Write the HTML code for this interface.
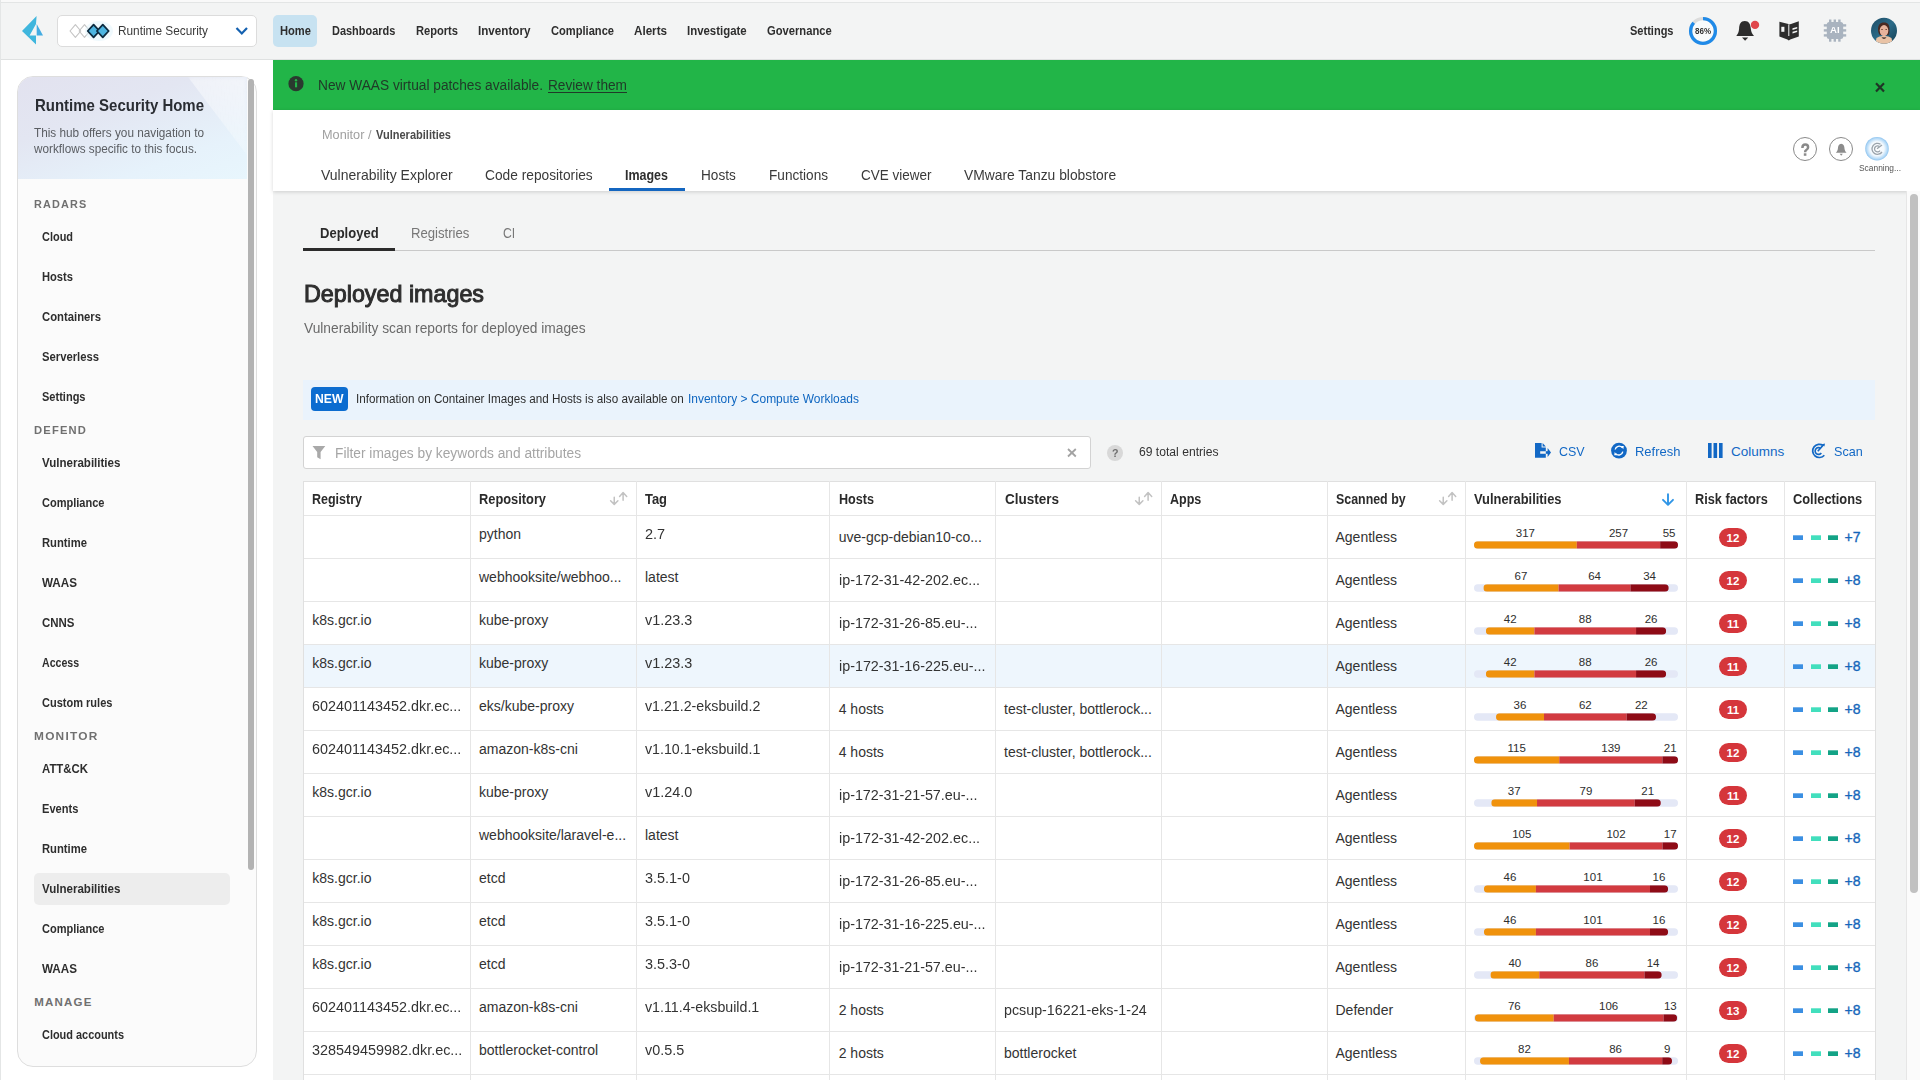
<!DOCTYPE html><html><head><meta charset='utf-8'><title>Deployed images</title><style>
*{margin:0;padding:0;box-sizing:border-box}
html,body{width:1920px;height:1080px;overflow:hidden;background:#fff;font-family:"Liberation Sans",sans-serif}
.a{position:absolute}
.t{position:absolute;white-space:nowrap;transform-origin:0 0}
svg{position:absolute;overflow:visible}
</style></head><body>
<div class="a" style="left:0px;top:0px;width:1920px;height:60px;background:#f3f4f4;border-bottom:1px solid #dfe1e1"></div>
<div class="a" style="left:0px;top:0px;width:1920px;height:2px;background:#f9f9f9"></div>
<div class="a" style="left:0px;top:2px;width:1920px;height:1px;background:#e3e5e5"></div>
<svg style="left:0;top:0" width="60" height="60"><path d="M36.6 16 L22 31 L36 44.5 L36 35.6 L29.6 35.6 L36 24 Z" fill="#3fb6dd"/><path d="M36.7 24 L43 35.6 L36.7 35.6 Z" fill="#44ace2"/></svg>
<div class="a" style="left:57px;top:15px;width:200px;height:32px;background:#fff;border:1px solid #dcdcdc;border-radius:5px"></div>
<svg style="left:0;top:0" width="130" height="60"><g stroke-linejoin="round"><path d="M75.4 24.6 L80.80000000000001 31 L75.4 37.4 L70.0 31 Z" fill="none" stroke="#c4c4c4" stroke-width="1.1"/><path d="M84.5 24.6 L89.9 31 L84.5 37.4 L79.1 31 Z" fill="none" stroke="#c4c4c4" stroke-width="1.1"/><ellipse cx="99" cy="31" rx="14" ry="10" fill="#dff3fb" opacity="0.5"/><path d="M93.6 24.7 L99.5 31 L93.6 37.3 L87.69999999999999 31 Z" fill="#4db5e1" stroke="#0c2b40" stroke-width="1.8"/><path d="M102.8 24.7 L108.7 31 L102.8 37.3 L96.89999999999999 31 Z" fill="#4db5e1" stroke="#0c2b40" stroke-width="1.8"/></g></svg>
<div class="t" style="left:117.50px;top:24.30px;font-size:13px;line-height:13px;color:#3a3a3a;transform:scaleX(0.9093);">Runtime Security</div>
<svg style="left:0;top:0" width="260" height="60"><path d="M236.5 28 L241.8 33.5 L247 28" fill="none" stroke="#1461b0" stroke-width="2.2"/></svg>
<div class="a" style="left:273px;top:15px;width:44px;height:32px;background:#c7e2f1;border-radius:5px"></div>
<div class="t" style="left:279.70px;top:25.22px;font-size:12.5px;line-height:12.5px;color:#2e2e2e;font-weight:bold;transform:scaleX(0.8926);">Home</div>
<div class="t" style="left:331.70px;top:25.22px;font-size:12.5px;line-height:12.5px;color:#2e2e2e;font-weight:bold;transform:scaleX(0.8762);">Dashboards</div>
<div class="t" style="left:416.00px;top:25.22px;font-size:12.5px;line-height:12.5px;color:#2e2e2e;font-weight:bold;transform:scaleX(0.8893);">Reports</div>
<div class="t" style="left:478.00px;top:25.22px;font-size:12.5px;line-height:12.5px;color:#2e2e2e;font-weight:bold;transform:scaleX(0.9331);">Inventory</div>
<div class="t" style="left:551.00px;top:25.22px;font-size:12.5px;line-height:12.5px;color:#2e2e2e;font-weight:bold;transform:scaleX(0.8892);">Compliance</div>
<div class="t" style="left:634.30px;top:25.22px;font-size:12.5px;line-height:12.5px;color:#2e2e2e;font-weight:bold;transform:scaleX(0.9314);">Alerts</div>
<div class="t" style="left:687.30px;top:25.22px;font-size:12.5px;line-height:12.5px;color:#2e2e2e;font-weight:bold;transform:scaleX(0.9142);">Investigate</div>
<div class="t" style="left:767.00px;top:25.22px;font-size:12.5px;line-height:12.5px;color:#2e2e2e;font-weight:bold;transform:scaleX(0.8955);">Governance</div>
<div class="t" style="left:1629.80px;top:25.22px;font-size:12.5px;line-height:12.5px;color:#2e2e2e;font-weight:bold;transform:scaleX(0.8822);">Settings</div>
<svg style="left:0;top:0" width="1920" height="60"><circle cx="1703" cy="31" r="12.4" fill="#f9fbfc" stroke="#dcdcdc" stroke-width="3.3"/><circle cx="1703" cy="31" r="12.4" fill="none" stroke="#1f8ae8" stroke-width="3.3" stroke-dasharray="67 77.9" transform="rotate(-90 1703 31)"/></svg>
<div class="t" style="left:1695.00px;top:27.00px;font-size:8.5px;line-height:8.5px;color:#333;font-weight:bold;transform:scaleX(0.9406);">86%</div>
<svg style="left:0;top:0" width="1920" height="60"><path d="M1744.8 21 C1740.6 21 1739.3 24.5 1739.1 28.5 C1738.9 32.3 1737.7 34 1736.3 35.9 L1754 35.9 C1752.4 34 1751.1 32.3 1750.8 28.5 C1750.5 24.5 1749 21 1744.8 21 Z" fill="#2d2d2d"/><path d="M1742 37.6 L1748.2 37.6 L1745.1 40.7 Z" fill="#2d2d2d"/><circle cx="1755" cy="24.9" r="4.2" fill="#e0474c"/><path d="M1779.4 21.8 L1788.4 24 L1788.8 24.6 L1791 24 L1798.8 21.2 L1798.8 36.5 L1790.2 39.4 L1788.8 40.6 L1787.4 39.4 L1779.4 36.5 Z" fill="#2d2d2d"/><rect x="1788.3" y="24.5" width="1" height="11.5" fill="#f3f4f4"/><rect x="1781.3" y="26.8" width="3.1" height="5" fill="#f3f4f4"/><path d="M1792.5 28.3 L1797.2 27 L1797.2 28.6 L1792.5 29.9 Z M1792.5 31.8 L1797.2 30.5 L1797.2 32.1 L1792.5 33.4 Z" fill="#f3f4f4"/><g fill="#a9b3bf"><rect x="1826.8" y="22.1" width="16.4" height="16.9" rx="2.5"/><rect x="1829.0" y="19.5" width="2.4" height="3.5"/><rect x="1829.0" y="38.2" width="2.4" height="3.5"/><rect x="1823.8" y="24.2" width="3.5" height="2.4"/><rect x="1842.7" y="24.2" width="3.5" height="2.4"/><rect x="1833.6" y="19.5" width="2.4" height="3.5"/><rect x="1833.6" y="38.2" width="2.4" height="3.5"/><rect x="1823.8" y="29.2" width="3.5" height="2.4"/><rect x="1842.7" y="29.2" width="3.5" height="2.4"/><rect x="1838.2" y="19.5" width="2.4" height="3.5"/><rect x="1838.2" y="38.2" width="2.4" height="3.5"/><rect x="1823.8" y="34.2" width="3.5" height="2.4"/><rect x="1842.7" y="34.2" width="3.5" height="2.4"/></g><defs><clipPath id="avc"><circle cx="1884" cy="30.8" r="13"/></clipPath><linearGradient id="avg" x1="0" y1="0" x2="1" y2="1"><stop offset="0" stop-color="#1d4a63"/><stop offset="0.5" stop-color="#2b6b88"/><stop offset="1" stop-color="#123a4e"/></linearGradient></defs><g clip-path="url(#avc)"><rect x="1870" y="17" width="28" height="28" fill="url(#avg)"/><path d="M1875 45 L1876.5 38 Q1880 35.5 1884 36 Q1888 35.5 1891.5 38 L1893 45 Z" fill="#e9c3a6"/><path d="M1884 22.4 C1880 22.4 1878 25 1878 29 C1878 32 1878.8 34 1879.8 35 L1888.5 35 C1889.5 34 1889.5 32 1889.5 29 C1889.5 25 1888 22.4 1884 22.4 Z" fill="#4a2a22"/><ellipse cx="1884" cy="30.6" rx="4.3" ry="5.6" fill="#e6b39c"/><rect x="1881.3" y="29" width="1.4" height="1" fill="#6b4030"/><rect x="1885.5" y="29" width="1.4" height="1" fill="#6b4030"/><path d="M1881.5 37.2 Q1884 40.5 1886.5 37.2 Q1884 38 1881.5 37.2 Z" fill="#1f1212"/></g></svg>
<div class="t" style="left:1829.60px;top:26.18px;font-size:9px;line-height:9px;color:#fff;font-weight:bold;transform:scaleX(1.0667);">AI</div>
<div class="a" style="left:0px;top:60px;width:273px;height:1020px;background:#fff"></div>
<div class="a" style="left:0px;top:0px;width:1px;height:1080px;background:#e4e6e6"></div>
<div class="a" style="left:17px;top:76px;width:240px;height:991px;background:#fbfbfb;border:1px solid #dedede;border-radius:16px;overflow:hidden"></div>
<div class="a" style="left:18px;top:77px;width:229px;height:102px;border-radius:15px 0 0 0;background:linear-gradient(160deg,#e2e2ef 0%,#e3e6f2 35%,#e6f2fb 75%,#e8f6fd 100%)"></div>
<div class="a" style="left:188px;top:77px;width:59px;height:78px;background:linear-gradient(200deg,rgba(255,255,255,0.55),rgba(255,255,255,0.15));clip-path:polygon(0 0,100% 0,100% 100%);filter:blur(2px)"></div>
<div class="a" style="left:248px;top:79px;width:6px;height:791px;background:#b3b3b3;border-radius:3px"></div>
<div class="t" style="left:34.70px;top:96.83px;font-size:16.5px;line-height:16.5px;color:#2a2d33;font-weight:bold;transform:scaleX(0.9080);">Runtime Security Home</div>
<div class="t" style="left:34.30px;top:126.54px;font-size:12px;line-height:12px;color:#5a5d62;transform:scaleX(0.9814);">This hub offers you navigation to</div>
<div class="t" style="left:34.30px;top:142.54px;font-size:12px;line-height:12px;color:#5a5d62;transform:scaleX(0.9777);">workflows specific to this focus.</div>
<div class="a" style="left:34px;top:873px;width:196px;height:32px;background:#ededed;border-radius:5px"></div>
<div class="t" style="left:34.30px;top:199.07px;font-size:11.5px;line-height:11.5px;color:#707070;font-weight:bold;letter-spacing:1.2px;transform:scaleX(0.9451);">RADARS</div>
<div class="t" style="left:42.00px;top:230.84px;font-size:12px;line-height:12px;color:#2e2e2e;font-weight:bold;transform:scaleX(0.9121);">Cloud</div>
<div class="t" style="left:42.00px;top:270.84px;font-size:12px;line-height:12px;color:#2e2e2e;font-weight:bold;transform:scaleX(0.9298);">Hosts</div>
<div class="t" style="left:42.00px;top:310.84px;font-size:12px;line-height:12px;color:#2e2e2e;font-weight:bold;transform:scaleX(0.9413);">Containers</div>
<div class="t" style="left:42.00px;top:350.84px;font-size:12px;line-height:12px;color:#2e2e2e;font-weight:bold;transform:scaleX(0.9387);">Serverless</div>
<div class="t" style="left:42.00px;top:390.84px;font-size:12px;line-height:12px;color:#2e2e2e;font-weight:bold;transform:scaleX(0.9189);">Settings</div>
<div class="t" style="left:34.30px;top:425.07px;font-size:11.5px;line-height:11.5px;color:#707070;font-weight:bold;letter-spacing:1.2px;transform:scaleX(0.9728);">DEFEND</div>
<div class="t" style="left:42.00px;top:456.84px;font-size:12px;line-height:12px;color:#2e2e2e;font-weight:bold;transform:scaleX(0.9610);">Vulnerabilities</div>
<div class="t" style="left:42.00px;top:496.84px;font-size:12px;line-height:12px;color:#2e2e2e;font-weight:bold;transform:scaleX(0.9189);">Compliance</div>
<div class="t" style="left:42.00px;top:536.84px;font-size:12px;line-height:12px;color:#2e2e2e;font-weight:bold;transform:scaleX(0.9375);">Runtime</div>
<div class="t" style="left:42.00px;top:576.84px;font-size:12px;line-height:12px;color:#2e2e2e;font-weight:bold;transform:scaleX(0.9722);">WAAS</div>
<div class="t" style="left:42.00px;top:616.84px;font-size:12px;line-height:12px;color:#2e2e2e;font-weight:bold;transform:scaleX(0.9558);">CNNS</div>
<div class="t" style="left:42.00px;top:656.84px;font-size:12px;line-height:12px;color:#2e2e2e;font-weight:bold;transform:scaleX(0.8803);">Access</div>
<div class="t" style="left:42.00px;top:696.84px;font-size:12px;line-height:12px;color:#2e2e2e;font-weight:bold;transform:scaleX(0.9181);">Custom rules</div>
<div class="t" style="left:34.30px;top:731.07px;font-size:11.5px;line-height:11.5px;color:#707070;font-weight:bold;letter-spacing:1.2px;transform:scaleX(1.0321);">MONITOR</div>
<div class="t" style="left:42.00px;top:762.84px;font-size:12px;line-height:12px;color:#2e2e2e;font-weight:bold;transform:scaleX(0.9498);">ATT&amp;CK</div>
<div class="t" style="left:42.00px;top:802.84px;font-size:12px;line-height:12px;color:#2e2e2e;font-weight:bold;transform:scaleX(0.9225);">Events</div>
<div class="t" style="left:42.00px;top:842.84px;font-size:12px;line-height:12px;color:#2e2e2e;font-weight:bold;transform:scaleX(0.9375);">Runtime</div>
<div class="t" style="left:42.00px;top:882.84px;font-size:12px;line-height:12px;color:#2e2e2e;font-weight:bold;transform:scaleX(0.9610);">Vulnerabilities</div>
<div class="t" style="left:42.00px;top:922.84px;font-size:12px;line-height:12px;color:#2e2e2e;font-weight:bold;transform:scaleX(0.9189);">Compliance</div>
<div class="t" style="left:42.00px;top:962.84px;font-size:12px;line-height:12px;color:#2e2e2e;font-weight:bold;transform:scaleX(0.9722);">WAAS</div>
<div class="t" style="left:34.30px;top:997.07px;font-size:11.5px;line-height:11.5px;color:#707070;font-weight:bold;letter-spacing:1.2px;">MANAGE</div>
<div class="t" style="left:42.00px;top:1028.84px;font-size:12px;line-height:12px;color:#2e2e2e;font-weight:bold;transform:scaleX(0.9111);">Cloud accounts</div>
<div class="a" style="left:273px;top:60px;width:1647px;height:50px;background:#22b548"></div>
<svg style="left:0;top:0" width="1920" height="120"><circle cx="296" cy="83.7" r="7.6" fill="#2a3a2f"/><circle cx="296" cy="80.2" r="1.2" fill="#22b548"/><rect x="295" y="82.3" width="2.1" height="5" fill="#22b548"/><path d="M1876 83.3 L1884 91.5 M1884 83.3 L1876 91.5" stroke="#1f3526" stroke-width="2.2"/></svg>
<div class="t" style="left:318.40px;top:77.95px;font-size:14px;line-height:14px;color:#203a28;transform:scaleX(0.9791);">New WAAS virtual patches available.</div>
<div class="t" style="left:547.50px;top:77.95px;font-size:14px;line-height:14px;color:#203a28;transform:scaleX(0.9763);text-decoration:underline;text-underline-offset:1.5px">Review them</div>
<div class="a" style="left:273px;top:191px;width:1633px;height:889px;background:#f3f4f4"></div>
<div class="a" style="left:273px;top:110px;width:1647px;height:81px;background:#fff;box-shadow:0 1px 4px rgba(0,0,0,0.16)"></div>
<div class="a" style="left:1906px;top:191px;width:14px;height:889px;background:#fbfbfb;border-left:1px solid #e6e6e6"></div>
<div class="a" style="left:1910px;top:194px;width:8px;height:699px;background:#c1c1c1;border-radius:4px"></div>
<div class="t" style="left:321.50px;top:128.99px;font-size:12.3px;line-height:12.3px;color:#a0a0a0;transform:scaleX(1.0339);">Monitor / </div>
<div class="t" style="left:375.50px;top:128.99px;font-size:12.3px;line-height:12.3px;color:#4a4a4a;font-weight:bold;transform:scaleX(0.8969);">Vulnerabilities</div>
<div class="t" style="left:321.00px;top:167.93px;font-size:14.5px;line-height:14.5px;color:#3a3a3a;transform:scaleX(0.9651);">Vulnerability Explorer</div>
<div class="t" style="left:485.00px;top:167.93px;font-size:14.5px;line-height:14.5px;color:#3a3a3a;transform:scaleX(0.9477);">Code repositories</div>
<div class="t" style="left:625.40px;top:167.93px;font-size:14.5px;line-height:14.5px;color:#2f2f2f;font-weight:bold;transform:scaleX(0.8605);">Images</div>
<div class="t" style="left:701.00px;top:167.93px;font-size:14.5px;line-height:14.5px;color:#3a3a3a;transform:scaleX(0.9389);">Hosts</div>
<div class="t" style="left:769.00px;top:167.93px;font-size:14.5px;line-height:14.5px;color:#3a3a3a;transform:scaleX(0.9385);">Functions</div>
<div class="t" style="left:861.00px;top:167.93px;font-size:14.5px;line-height:14.5px;color:#3a3a3a;transform:scaleX(0.9308);">CVE viewer</div>
<div class="t" style="left:964.40px;top:167.93px;font-size:14.5px;line-height:14.5px;color:#3a3a3a;transform:scaleX(0.9547);">VMware Tanzu blobstore</div>
<div class="a" style="left:609px;top:188px;width:76px;height:3px;background:#1466c0"></div>
<svg style="left:0;top:0" width="1920" height="200"><circle cx="1805" cy="149" r="11.5" fill="#fff" stroke="#8a8a8a" stroke-width="1"/><circle cx="1841" cy="149" r="11.5" fill="#fff" stroke="#8a8a8a" stroke-width="1"/><defs><radialGradient id="sg" cx="50%" cy="50%" r="50%"><stop offset="0" stop-color="#ffffff"/><stop offset="0.6" stop-color="#f3f9fe"/><stop offset="0.88" stop-color="#b3d9f7"/><stop offset="1" stop-color="#8ec3ee"/></radialGradient></defs><circle cx="1877" cy="148.7" r="11.8" fill="url(#sg)"/><path d="M1841.2 143.8 C1838.8 143.8 1838 146 1837.9 148.5 C1837.8 150.5 1836.8 151.7 1835.8 152.8 L1846.6 152.8 C1845.6 151.7 1844.6 150.5 1844.5 148.5 C1844.4 146 1843.6 143.8 1841.2 143.8 Z" fill="#8c8c8c"/><path d="M1839.6 153.8 L1842.8 153.8 L1841.2 155.8 Z" fill="#8c8c8c"/><path d="M1802.4 148 Q1802.4 144.6 1805.3 144.6 Q1808.1 144.6 1808.1 147.2 Q1808.1 149 1806.3 150 Q1805.1 150.7 1805.1 152.2" fill="none" stroke="#8a8a8a" stroke-width="2.5"/><rect x="1803.8" y="153.3" width="2.6" height="2.5" fill="#8a8a8a"/><path d="M1880.5 144.2 A5.5 5.5 0 1 0 1882 152 M1879.5 146.6 A3 3 0 1 0 1880 150.6" fill="none" stroke="#9aa3ab" stroke-width="1.3"/><path d="M1877 148.7 L1882 145" stroke="#9aa3ab" stroke-width="1.3"/></svg>
<div class="t" style="left:1859.00px;top:164.18px;font-size:9px;line-height:9px;color:#555;transform:scaleX(0.9328);">Scanning...</div>
<div class="t" style="left:319.70px;top:225.73px;font-size:14.5px;line-height:14.5px;color:#2b2b2b;font-weight:bold;transform:scaleX(0.8979);">Deployed</div>
<div class="t" style="left:411.30px;top:225.73px;font-size:14.5px;line-height:14.5px;color:#777;transform:scaleX(0.9059);">Registries</div>
<div class="t" style="left:502.50px;top:225.73px;font-size:14.5px;line-height:14.5px;color:#777;transform:scaleX(0.8414);">CI</div>
<div class="a" style="left:303px;top:250px;width:1572px;height:1px;background:#c9c9c9"></div>
<div class="a" style="left:303px;top:248px;width:92px;height:3px;background:#2b2b2b"></div>
<div class="t" style="left:304.00px;top:281.68px;font-size:24px;line-height:24px;color:#2e2e2e;transform:scaleX(0.9706);-webkit-text-stroke:1px #2e2e2e">Deployed images</div>
<div class="t" style="left:303.70px;top:321.15px;font-size:14px;line-height:14px;color:#6a6a6a;transform:scaleX(0.9825);">Vulnerability scan reports for deployed images</div>
<div class="a" style="left:303px;top:379.5px;width:1572px;height:40px;background:#eaf3fc"></div>
<div class="a" style="left:311px;top:387px;width:37px;height:24px;background:#0b6cd0;border-radius:4px"></div>
<div class="t" style="left:315.30px;top:393.09px;font-size:12.3px;line-height:12.3px;color:#fff;font-weight:bold;transform:scaleX(0.9897);">NEW</div>
<div class="t" style="left:356.20px;top:392.72px;font-size:12.5px;line-height:12.5px;color:#2e2e2e;transform:scaleX(0.9341);">Information on Container Images and Hosts is also available on </div>
<div class="t" style="left:688.00px;top:392.72px;font-size:12.5px;line-height:12.5px;color:#0f66c0;transform:scaleX(0.9571);">Inventory &gt; Compute Workloads</div>
<div class="a" style="left:303px;top:436px;width:788px;height:33px;background:#fff;border:1px solid #d3d3d3;border-radius:3px"></div>
<svg style="left:0;top:0" width="1920" height="480"><path d="M312.5 446 L325.3 446 L320.6 452 L320.6 459.2 L317.2 457.2 L317.2 452 Z" fill="#a9a9a9"/><path d="M1068 449 L1075.8 456.5 M1075.8 449 L1068 456.5" stroke="#a3a3a3" stroke-width="1.8"/><circle cx="1115" cy="453" r="8" fill="#d8d8d8"/></svg>
<div class="t" style="left:334.50px;top:446.15px;font-size:14px;line-height:14px;color:#a5a5a5;transform:scaleX(0.9819);">Filter images by keywords and attributes</div>
<div class="t" style="left:1111.50px;top:447.99px;font-size:11px;line-height:11px;color:#6e6e6e;font-weight:bold;transform:scaleX(0.9674);">?</div>
<div class="t" style="left:1139.40px;top:446.22px;font-size:12.5px;line-height:12.5px;color:#333;transform:scaleX(0.9708);">69 total entries</div>
<svg style="left:0;top:0" width="1920" height="480"><path d="M1535 443 L1541.6 443 L1541.6 447.6 L1545.8 447.6 L1545.8 451.2 L1540.2 451.2 L1540.2 453.8 L1545.8 453.8 L1545.8 457.8 L1535 457.8 Z" fill="#1268c5"/><path d="M1542.6 443 L1545.8 446.5 L1542.6 446.5 Z" fill="#1268c5"/><rect x="1545.8" y="451.2" width="2.2" height="2.6" fill="#1268c5"/><path d="M1547.6 448 L1551 452.5 L1547.6 457 Z" fill="#1268c5"/><circle cx="1619" cy="450.6" r="7.9" fill="#1268c5"/><path d="M1615.2 449.5 A4 4 0 0 1 1622.2 447.6 M1622.8 451.7 A4 4 0 0 1 1615.8 453.6" fill="none" stroke="#fff" stroke-width="1.4"/><path d="M1620.8 446 L1623.8 446 L1623.3 449.2 Z M1617.2 455.2 L1614.2 455.2 L1614.7 452 Z" fill="#fff"/><rect x="1708" y="443" width="3.6" height="15" fill="#1268c5"/><rect x="1713.5" y="443" width="3.6" height="15" fill="#1268c5"/><rect x="1719" y="443" width="3.6" height="15" fill="#1268c5"/><path d="M1823.2 445.6 A6.6 6.6 0 1 0 1824.3 455.2" fill="none" stroke="#1268c5" stroke-width="1.7"/><path d="M1820.6 448.3 A3.4 3.4 0 1 0 1821.3 453" fill="none" stroke="#1268c5" stroke-width="1.6"/><path d="M1817.8 451.2 L1823.6 444.6" stroke="#1268c5" stroke-width="1.6"/><path d="M1822 444.2 L1825 443.6 L1824.4 446.6 Z" fill="#1268c5"/></svg>
<div class="t" style="left:1559.00px;top:444.57px;font-size:13.5px;line-height:13.5px;color:#1268c5;transform:scaleX(0.9222);">CSV</div>
<div class="t" style="left:1635.00px;top:444.57px;font-size:13.5px;line-height:13.5px;color:#1268c5;transform:scaleX(0.9605);">Refresh</div>
<div class="t" style="left:1731.00px;top:444.57px;font-size:13.5px;line-height:13.5px;color:#1268c5;">Columns</div>
<div class="t" style="left:1834.00px;top:444.57px;font-size:13.5px;line-height:13.5px;color:#1268c5;transform:scaleX(0.9327);">Scan</div>
<div class="a" style="left:303px;top:481px;width:1573px;height:599px;background:#fff;border:1px solid #e0e0e0;border-bottom:none"></div>
<div class="a" style="left:304px;top:645px;width:1571px;height:42px;background:#eef6fd"></div>
<div class="a" style="left:304px;top:515px;width:1571px;height:1px;background:#e6e6e6"></div>
<div class="a" style="left:304px;top:558px;width:1571px;height:1px;background:#e6e6e6"></div>
<div class="a" style="left:304px;top:601px;width:1571px;height:1px;background:#e6e6e6"></div>
<div class="a" style="left:304px;top:644px;width:1571px;height:1px;background:#e6e6e6"></div>
<div class="a" style="left:304px;top:687px;width:1571px;height:1px;background:#e6e6e6"></div>
<div class="a" style="left:304px;top:730px;width:1571px;height:1px;background:#e6e6e6"></div>
<div class="a" style="left:304px;top:773px;width:1571px;height:1px;background:#e6e6e6"></div>
<div class="a" style="left:304px;top:816px;width:1571px;height:1px;background:#e6e6e6"></div>
<div class="a" style="left:304px;top:859px;width:1571px;height:1px;background:#e6e6e6"></div>
<div class="a" style="left:304px;top:902px;width:1571px;height:1px;background:#e6e6e6"></div>
<div class="a" style="left:304px;top:945px;width:1571px;height:1px;background:#e6e6e6"></div>
<div class="a" style="left:304px;top:988px;width:1571px;height:1px;background:#e6e6e6"></div>
<div class="a" style="left:304px;top:1031px;width:1571px;height:1px;background:#e6e6e6"></div>
<div class="a" style="left:304px;top:1074px;width:1571px;height:1px;background:#e6e6e6"></div>
<div class="a" style="left:470px;top:481px;width:1px;height:599px;background:#e6e6e6"></div>
<div class="a" style="left:636px;top:481px;width:1px;height:599px;background:#e6e6e6"></div>
<div class="a" style="left:829px;top:481px;width:1px;height:599px;background:#e6e6e6"></div>
<div class="a" style="left:995px;top:481px;width:1px;height:599px;background:#e6e6e6"></div>
<div class="a" style="left:1161px;top:481px;width:1px;height:599px;background:#e6e6e6"></div>
<div class="a" style="left:1327px;top:481px;width:1px;height:599px;background:#e6e6e6"></div>
<div class="a" style="left:1465px;top:481px;width:1px;height:599px;background:#e6e6e6"></div>
<div class="a" style="left:1686px;top:481px;width:1px;height:599px;background:#e6e6e6"></div>
<div class="a" style="left:1784px;top:481px;width:1px;height:599px;background:#e6e6e6"></div>
<div class="t" style="left:312.30px;top:491.53px;font-size:14.5px;line-height:14.5px;color:#2b2b2b;font-weight:bold;transform:scaleX(0.8618);">Registry</div>
<div class="t" style="left:479.00px;top:491.53px;font-size:14.5px;line-height:14.5px;color:#2b2b2b;font-weight:bold;transform:scaleX(0.8847);">Repository</div>
<div class="t" style="left:645.00px;top:491.53px;font-size:14.5px;line-height:14.5px;color:#2b2b2b;font-weight:bold;transform:scaleX(0.8906);">Tag</div>
<div class="t" style="left:838.70px;top:491.53px;font-size:14.5px;line-height:14.5px;color:#2b2b2b;font-weight:bold;transform:scaleX(0.8688);">Hosts</div>
<div class="t" style="left:1004.50px;top:491.53px;font-size:14.5px;line-height:14.5px;color:#2b2b2b;font-weight:bold;transform:scaleX(0.9307);">Clusters</div>
<div class="t" style="left:1170.30px;top:491.53px;font-size:14.5px;line-height:14.5px;color:#2b2b2b;font-weight:bold;transform:scaleX(0.8634);">Apps</div>
<div class="t" style="left:1335.50px;top:491.53px;font-size:14.5px;line-height:14.5px;color:#2b2b2b;font-weight:bold;transform:scaleX(0.8552);">Scanned by</div>
<div class="t" style="left:1474.00px;top:491.53px;font-size:14.5px;line-height:14.5px;color:#2b2b2b;font-weight:bold;transform:scaleX(0.8876);">Vulnerabilities</div>
<div class="t" style="left:1694.80px;top:491.53px;font-size:14.5px;line-height:14.5px;color:#2b2b2b;font-weight:bold;transform:scaleX(0.8771);">Risk factors</div>
<div class="t" style="left:1793.00px;top:491.53px;font-size:14.5px;line-height:14.5px;color:#2b2b2b;font-weight:bold;transform:scaleX(0.8855);">Collections</div>
<svg style="left:0;top:0" width="1920" height="1080"><g fill="none" stroke="#c2c2c2" stroke-width="1.5" stroke-linecap="round" stroke-linejoin="round"><path d="M614.25 497.3 L614.25 504.3 M610.6 500.8 L614.25 504.4 L617.9 500.8"/><path d="M623.1 500.2 L623.1 492.7 M619.6 496.4 L623.1 492.6 L626.7 496.4"/></g><g fill="none" stroke="#c2c2c2" stroke-width="1.5" stroke-linecap="round" stroke-linejoin="round"><path d="M1139.25 497.3 L1139.25 504.3 M1135.6 500.8 L1139.25 504.4 L1142.9 500.8"/><path d="M1148.1 500.2 L1148.1 492.7 M1144.6 496.4 L1148.1 492.6 L1151.7 496.4"/></g><g fill="none" stroke="#c2c2c2" stroke-width="1.5" stroke-linecap="round" stroke-linejoin="round"><path d="M1443.25 497.3 L1443.25 504.3 M1439.6 500.8 L1443.25 504.4 L1446.9 500.8"/><path d="M1452.1 500.2 L1452.1 492.7 M1448.6 496.4 L1452.1 492.6 L1455.7 496.4"/></g><g fill="none" stroke="#2f95e6" stroke-width="1.9" stroke-linecap="round" stroke-linejoin="round"><path d="M1668 494.2 L1668 504.6 M1663 499.8 L1668 504.8 L1673 499.8"/></g><rect x="1474" y="541.2" width="204" height="7.5" rx="3.75" fill="#e4e8f6"/><clipPath id="cb0"><rect x="1474.00" y="541.2" width="204.00" height="7.5" rx="3.75"/></clipPath><g clip-path="url(#cb0)"><rect x="1474.00" y="541.2" width="102.81" height="7.5" fill="#f0920c"/><rect x="1576.81" y="541.2" width="83.35" height="7.5" fill="#d23b40"/><rect x="1660.16" y="541.2" width="18.84" height="7.5" fill="#8e0b16"/></g><rect x="1719" y="528" width="28" height="19" rx="9.5" fill="#d5363b"/><rect x="1793" y="535.3" width="10" height="4.7" fill="#3b8fe2"/><rect x="1811" y="535.3" width="10" height="4.7" fill="#42dfbd"/><rect x="1828" y="535.3" width="10" height="4.7" fill="#13a386"/><rect x="1474" y="584.2" width="204" height="7.5" rx="3.75" fill="#e4e8f6"/><clipPath id="cb1"><rect x="1483.38" y="584.2" width="185.23" height="7.5" rx="3.75"/></clipPath><g clip-path="url(#cb1)"><rect x="1483.38" y="584.2" width="75.22" height="7.5" fill="#f0920c"/><rect x="1558.60" y="584.2" width="71.85" height="7.5" fill="#d23b40"/><rect x="1630.45" y="584.2" width="39.17" height="7.5" fill="#8e0b16"/></g><rect x="1719" y="571" width="28" height="19" rx="9.5" fill="#d5363b"/><rect x="1793" y="578.3" width="10" height="4.7" fill="#3b8fe2"/><rect x="1811" y="578.3" width="10" height="4.7" fill="#42dfbd"/><rect x="1828" y="578.3" width="10" height="4.7" fill="#13a386"/><rect x="1474" y="627.2" width="204" height="7.5" rx="3.75" fill="#e4e8f6"/><clipPath id="cb2"><rect x="1485.91" y="627.2" width="180.18" height="7.5" rx="3.75"/></clipPath><g clip-path="url(#cb2)"><rect x="1485.91" y="627.2" width="48.51" height="7.5" fill="#f0920c"/><rect x="1534.42" y="627.2" width="101.64" height="7.5" fill="#d23b40"/><rect x="1636.06" y="627.2" width="31.03" height="7.5" fill="#8e0b16"/></g><rect x="1719" y="614" width="28" height="19" rx="9.5" fill="#d5363b"/><rect x="1793" y="621.3" width="10" height="4.7" fill="#3b8fe2"/><rect x="1811" y="621.3" width="10" height="4.7" fill="#42dfbd"/><rect x="1828" y="621.3" width="10" height="4.7" fill="#13a386"/><rect x="1474" y="670.2" width="204" height="7.5" rx="3.75" fill="#e4e8f6"/><clipPath id="cb3"><rect x="1485.91" y="670.2" width="180.18" height="7.5" rx="3.75"/></clipPath><g clip-path="url(#cb3)"><rect x="1485.91" y="670.2" width="48.51" height="7.5" fill="#f0920c"/><rect x="1534.42" y="670.2" width="101.64" height="7.5" fill="#d23b40"/><rect x="1636.06" y="670.2" width="31.03" height="7.5" fill="#8e0b16"/></g><rect x="1719" y="657" width="28" height="19" rx="9.5" fill="#d5363b"/><rect x="1793" y="664.3" width="10" height="4.7" fill="#3b8fe2"/><rect x="1811" y="664.3" width="10" height="4.7" fill="#42dfbd"/><rect x="1828" y="664.3" width="10" height="4.7" fill="#13a386"/><rect x="1474" y="713.2" width="204" height="7.5" rx="3.75" fill="#e4e8f6"/><clipPath id="cb4"><rect x="1496.02" y="713.2" width="159.97" height="7.5" rx="3.75"/></clipPath><g clip-path="url(#cb4)"><rect x="1496.02" y="713.2" width="47.99" height="7.5" fill="#f0920c"/><rect x="1544.01" y="713.2" width="82.65" height="7.5" fill="#d23b40"/><rect x="1626.66" y="713.2" width="30.33" height="7.5" fill="#8e0b16"/></g><rect x="1719" y="700" width="28" height="19" rx="9.5" fill="#d5363b"/><rect x="1793" y="707.3" width="10" height="4.7" fill="#3b8fe2"/><rect x="1811" y="707.3" width="10" height="4.7" fill="#42dfbd"/><rect x="1828" y="707.3" width="10" height="4.7" fill="#13a386"/><rect x="1474" y="756.2" width="204" height="7.5" rx="3.75" fill="#e4e8f6"/><clipPath id="cb5"><rect x="1474.00" y="756.2" width="204.00" height="7.5" rx="3.75"/></clipPath><g clip-path="url(#cb5)"><rect x="1474.00" y="756.2" width="85.31" height="7.5" fill="#f0920c"/><rect x="1559.31" y="756.2" width="103.11" height="7.5" fill="#d23b40"/><rect x="1662.42" y="756.2" width="16.58" height="7.5" fill="#8e0b16"/></g><rect x="1719" y="743" width="28" height="19" rx="9.5" fill="#d5363b"/><rect x="1793" y="750.3" width="10" height="4.7" fill="#3b8fe2"/><rect x="1811" y="750.3" width="10" height="4.7" fill="#42dfbd"/><rect x="1828" y="750.3" width="10" height="4.7" fill="#13a386"/><rect x="1474" y="799.2" width="204" height="7.5" rx="3.75" fill="#e4e8f6"/><clipPath id="cb6"><rect x="1491.24" y="799.2" width="169.51" height="7.5" rx="3.75"/></clipPath><g clip-path="url(#cb6)"><rect x="1491.24" y="799.2" width="45.78" height="7.5" fill="#f0920c"/><rect x="1537.02" y="799.2" width="97.75" height="7.5" fill="#d23b40"/><rect x="1634.77" y="799.2" width="26.98" height="7.5" fill="#8e0b16"/></g><rect x="1719" y="786" width="28" height="19" rx="9.5" fill="#d5363b"/><rect x="1793" y="793.3" width="10" height="4.7" fill="#3b8fe2"/><rect x="1811" y="793.3" width="10" height="4.7" fill="#42dfbd"/><rect x="1828" y="793.3" width="10" height="4.7" fill="#13a386"/><rect x="1474" y="842.2" width="204" height="7.5" rx="3.75" fill="#e4e8f6"/><clipPath id="cb7"><rect x="1474.00" y="842.2" width="204.00" height="7.5" rx="3.75"/></clipPath><g clip-path="url(#cb7)"><rect x="1474.00" y="842.2" width="95.62" height="7.5" fill="#f0920c"/><rect x="1569.62" y="842.2" width="92.89" height="7.5" fill="#d23b40"/><rect x="1662.52" y="842.2" width="16.48" height="7.5" fill="#8e0b16"/></g><rect x="1719" y="829" width="28" height="19" rx="9.5" fill="#d5363b"/><rect x="1793" y="836.3" width="10" height="4.7" fill="#3b8fe2"/><rect x="1811" y="836.3" width="10" height="4.7" fill="#42dfbd"/><rect x="1828" y="836.3" width="10" height="4.7" fill="#13a386"/><rect x="1474" y="885.2" width="204" height="7.5" rx="3.75" fill="#e4e8f6"/><clipPath id="cb8"><rect x="1483.95" y="885.2" width="184.11" height="7.5" rx="3.75"/></clipPath><g clip-path="url(#cb8)"><rect x="1483.95" y="885.2" width="51.96" height="7.5" fill="#f0920c"/><rect x="1535.90" y="885.2" width="114.08" height="7.5" fill="#d23b40"/><rect x="1649.98" y="885.2" width="19.07" height="7.5" fill="#8e0b16"/></g><rect x="1719" y="872" width="28" height="19" rx="9.5" fill="#d5363b"/><rect x="1793" y="879.3" width="10" height="4.7" fill="#3b8fe2"/><rect x="1811" y="879.3" width="10" height="4.7" fill="#42dfbd"/><rect x="1828" y="879.3" width="10" height="4.7" fill="#13a386"/><rect x="1474" y="928.2" width="204" height="7.5" rx="3.75" fill="#e4e8f6"/><clipPath id="cb9"><rect x="1483.95" y="928.2" width="184.11" height="7.5" rx="3.75"/></clipPath><g clip-path="url(#cb9)"><rect x="1483.95" y="928.2" width="51.96" height="7.5" fill="#f0920c"/><rect x="1535.90" y="928.2" width="114.08" height="7.5" fill="#d23b40"/><rect x="1649.98" y="928.2" width="19.07" height="7.5" fill="#8e0b16"/></g><rect x="1719" y="915" width="28" height="19" rx="9.5" fill="#d5363b"/><rect x="1793" y="922.3" width="10" height="4.7" fill="#3b8fe2"/><rect x="1811" y="922.3" width="10" height="4.7" fill="#42dfbd"/><rect x="1828" y="922.3" width="10" height="4.7" fill="#13a386"/><rect x="1474" y="971.2" width="204" height="7.5" rx="3.75" fill="#e4e8f6"/><clipPath id="cb10"><rect x="1490.40" y="971.2" width="171.20" height="7.5" rx="3.75"/></clipPath><g clip-path="url(#cb10)"><rect x="1490.40" y="971.2" width="48.91" height="7.5" fill="#f0920c"/><rect x="1539.32" y="971.2" width="105.16" height="7.5" fill="#d23b40"/><rect x="1644.48" y="971.2" width="18.12" height="7.5" fill="#8e0b16"/></g><rect x="1719" y="958" width="28" height="19" rx="9.5" fill="#d5363b"/><rect x="1793" y="965.3" width="10" height="4.7" fill="#3b8fe2"/><rect x="1811" y="965.3" width="10" height="4.7" fill="#42dfbd"/><rect x="1828" y="965.3" width="10" height="4.7" fill="#13a386"/><rect x="1474" y="1014.2" width="204" height="7.5" rx="3.75" fill="#e4e8f6"/><clipPath id="cb11"><rect x="1474.96" y="1014.2" width="202.07" height="7.5" rx="3.75"/></clipPath><g clip-path="url(#cb11)"><rect x="1474.96" y="1014.2" width="78.76" height="7.5" fill="#f0920c"/><rect x="1553.72" y="1014.2" width="109.84" height="7.5" fill="#d23b40"/><rect x="1663.56" y="1014.2" width="14.47" height="7.5" fill="#8e0b16"/></g><rect x="1719" y="1001" width="28" height="19" rx="9.5" fill="#d5363b"/><rect x="1793" y="1008.3" width="10" height="4.7" fill="#3b8fe2"/><rect x="1811" y="1008.3" width="10" height="4.7" fill="#42dfbd"/><rect x="1828" y="1008.3" width="10" height="4.7" fill="#13a386"/><rect x="1474" y="1057.2" width="204" height="7.5" rx="3.75" fill="#e4e8f6"/><clipPath id="cb12"><rect x="1480.02" y="1057.2" width="191.97" height="7.5" rx="3.75"/></clipPath><g clip-path="url(#cb12)"><rect x="1480.02" y="1057.2" width="88.93" height="7.5" fill="#f0920c"/><rect x="1568.95" y="1057.2" width="93.27" height="7.5" fill="#d23b40"/><rect x="1662.22" y="1057.2" width="10.76" height="7.5" fill="#8e0b16"/></g><rect x="1719" y="1044" width="28" height="19" rx="9.5" fill="#d5363b"/><rect x="1793" y="1051.3" width="10" height="4.7" fill="#3b8fe2"/><rect x="1811" y="1051.3" width="10" height="4.7" fill="#42dfbd"/><rect x="1828" y="1051.3" width="10" height="4.7" fill="#13a386"/></svg>
<div class="t" style="left:479.00px;top:527.15px;font-size:14px;line-height:14px;color:#333;">python</div>
<div class="t" style="left:645.00px;top:527.15px;font-size:14px;line-height:14px;color:#333;transform:scaleX(1.0344);">2.7</div>
<div class="t" style="left:838.70px;top:530.15px;font-size:14px;line-height:14px;color:#333;">uve-gcp-debian10-co...</div>
<div class="t" style="left:1335.50px;top:530.15px;font-size:14px;line-height:14px;color:#333;">Agentless</div>
<div class="t" style="left:1515.81px;top:527.87px;font-size:11.5px;line-height:11.5px;color:#2e2e2e;">317</div>
<div class="t" style="left:1608.89px;top:527.87px;font-size:11.5px;line-height:11.5px;color:#2e2e2e;">257</div>
<div class="t" style="left:1662.69px;top:527.87px;font-size:11.5px;line-height:11.5px;color:#2e2e2e;">55</div>
<div class="t" style="left:1726.60px;top:533.07px;font-size:11.5px;line-height:11.5px;color:#fff;font-weight:bold;">12</div>
<div class="t" style="left:1844.50px;top:530.15px;font-size:14px;line-height:14px;color:#1566ba;-webkit-text-stroke:0.35px #1566ba">+7</div>
<div class="t" style="left:479.00px;top:570.15px;font-size:14px;line-height:14px;color:#333;">webhooksite/webhoo...</div>
<div class="t" style="left:645.00px;top:570.15px;font-size:14px;line-height:14px;color:#333;">latest</div>
<div class="t" style="left:838.70px;top:573.15px;font-size:14px;line-height:14px;color:#333;transform:scaleX(1.0243);">ip-172-31-42-202.ec...</div>
<div class="t" style="left:1335.50px;top:573.15px;font-size:14px;line-height:14px;color:#333;">Agentless</div>
<div class="t" style="left:1514.60px;top:570.87px;font-size:11.5px;line-height:11.5px;color:#2e2e2e;">67</div>
<div class="t" style="left:1588.13px;top:570.87px;font-size:11.5px;line-height:11.5px;color:#2e2e2e;">64</div>
<div class="t" style="left:1643.14px;top:570.87px;font-size:11.5px;line-height:11.5px;color:#2e2e2e;">34</div>
<div class="t" style="left:1726.60px;top:576.07px;font-size:11.5px;line-height:11.5px;color:#fff;font-weight:bold;">12</div>
<div class="t" style="left:1844.50px;top:573.15px;font-size:14px;line-height:14px;color:#1566ba;-webkit-text-stroke:0.35px #1566ba">+8</div>
<div class="t" style="left:312.30px;top:613.15px;font-size:14px;line-height:14px;color:#333;">k8s.gcr.io</div>
<div class="t" style="left:479.00px;top:613.15px;font-size:14px;line-height:14px;color:#333;">kube-proxy</div>
<div class="t" style="left:645.00px;top:613.15px;font-size:14px;line-height:14px;color:#333;transform:scaleX(1.0292);">v1.23.3</div>
<div class="t" style="left:838.70px;top:616.15px;font-size:14px;line-height:14px;color:#333;transform:scaleX(1.0222);">ip-172-31-26-85.eu-...</div>
<div class="t" style="left:1335.50px;top:616.15px;font-size:14px;line-height:14px;color:#333;">Agentless</div>
<div class="t" style="left:1503.77px;top:613.87px;font-size:11.5px;line-height:11.5px;color:#2e2e2e;">42</div>
<div class="t" style="left:1578.84px;top:613.87px;font-size:11.5px;line-height:11.5px;color:#2e2e2e;">88</div>
<div class="t" style="left:1644.68px;top:613.87px;font-size:11.5px;line-height:11.5px;color:#2e2e2e;">26</div>
<div class="t" style="left:1726.92px;top:619.07px;font-size:11.5px;line-height:11.5px;color:#fff;font-weight:bold;">11</div>
<div class="t" style="left:1844.50px;top:616.15px;font-size:14px;line-height:14px;color:#1566ba;-webkit-text-stroke:0.35px #1566ba">+8</div>
<div class="t" style="left:312.30px;top:656.15px;font-size:14px;line-height:14px;color:#333;">k8s.gcr.io</div>
<div class="t" style="left:479.00px;top:656.15px;font-size:14px;line-height:14px;color:#333;">kube-proxy</div>
<div class="t" style="left:645.00px;top:656.15px;font-size:14px;line-height:14px;color:#333;transform:scaleX(1.0292);">v1.23.3</div>
<div class="t" style="left:838.70px;top:659.15px;font-size:14px;line-height:14px;color:#333;transform:scaleX(1.0234);">ip-172-31-16-225.eu-...</div>
<div class="t" style="left:1335.50px;top:659.15px;font-size:14px;line-height:14px;color:#333;">Agentless</div>
<div class="t" style="left:1503.77px;top:656.87px;font-size:11.5px;line-height:11.5px;color:#2e2e2e;">42</div>
<div class="t" style="left:1578.84px;top:656.87px;font-size:11.5px;line-height:11.5px;color:#2e2e2e;">88</div>
<div class="t" style="left:1644.68px;top:656.87px;font-size:11.5px;line-height:11.5px;color:#2e2e2e;">26</div>
<div class="t" style="left:1726.92px;top:662.07px;font-size:11.5px;line-height:11.5px;color:#fff;font-weight:bold;">11</div>
<div class="t" style="left:1844.50px;top:659.15px;font-size:14px;line-height:14px;color:#1566ba;-webkit-text-stroke:0.35px #1566ba">+8</div>
<div class="t" style="left:312.30px;top:699.15px;font-size:14px;line-height:14px;color:#333;transform:scaleX(1.0276);">602401143452.dkr.ec...</div>
<div class="t" style="left:479.00px;top:699.15px;font-size:14px;line-height:14px;color:#333;">eks/kube-proxy</div>
<div class="t" style="left:645.00px;top:699.15px;font-size:14px;line-height:14px;color:#333;transform:scaleX(1.0147);">v1.21.2-eksbuild.2</div>
<div class="t" style="left:838.70px;top:702.15px;font-size:14px;line-height:14px;color:#333;">4 hosts</div>
<div class="t" style="left:1004.00px;top:702.15px;font-size:14px;line-height:14px;color:#333;">test-cluster, bottlerock...</div>
<div class="t" style="left:1335.50px;top:702.15px;font-size:14px;line-height:14px;color:#333;">Agentless</div>
<div class="t" style="left:1513.62px;top:699.87px;font-size:11.5px;line-height:11.5px;color:#2e2e2e;">36</div>
<div class="t" style="left:1578.94px;top:699.87px;font-size:11.5px;line-height:11.5px;color:#2e2e2e;">62</div>
<div class="t" style="left:1634.92px;top:699.87px;font-size:11.5px;line-height:11.5px;color:#2e2e2e;">22</div>
<div class="t" style="left:1726.92px;top:705.07px;font-size:11.5px;line-height:11.5px;color:#fff;font-weight:bold;">11</div>
<div class="t" style="left:1844.50px;top:702.15px;font-size:14px;line-height:14px;color:#1566ba;-webkit-text-stroke:0.35px #1566ba">+8</div>
<div class="t" style="left:312.30px;top:742.15px;font-size:14px;line-height:14px;color:#333;transform:scaleX(1.0276);">602401143452.dkr.ec...</div>
<div class="t" style="left:479.00px;top:742.15px;font-size:14px;line-height:14px;color:#333;">amazon-k8s-cni</div>
<div class="t" style="left:645.00px;top:742.15px;font-size:14px;line-height:14px;color:#333;transform:scaleX(1.0147);">v1.10.1-eksbuild.1</div>
<div class="t" style="left:838.70px;top:745.15px;font-size:14px;line-height:14px;color:#333;">4 hosts</div>
<div class="t" style="left:1004.00px;top:745.15px;font-size:14px;line-height:14px;color:#333;">test-cluster, bottlerock...</div>
<div class="t" style="left:1335.50px;top:745.15px;font-size:14px;line-height:14px;color:#333;">Agentless</div>
<div class="t" style="left:1507.49px;top:742.87px;font-size:11.5px;line-height:11.5px;color:#2e2e2e;">115</div>
<div class="t" style="left:1601.27px;top:742.87px;font-size:11.5px;line-height:11.5px;color:#2e2e2e;">139</div>
<div class="t" style="left:1663.82px;top:742.87px;font-size:11.5px;line-height:11.5px;color:#2e2e2e;">21</div>
<div class="t" style="left:1726.60px;top:748.07px;font-size:11.5px;line-height:11.5px;color:#fff;font-weight:bold;">12</div>
<div class="t" style="left:1844.50px;top:745.15px;font-size:14px;line-height:14px;color:#1566ba;-webkit-text-stroke:0.35px #1566ba">+8</div>
<div class="t" style="left:312.30px;top:785.15px;font-size:14px;line-height:14px;color:#333;">k8s.gcr.io</div>
<div class="t" style="left:479.00px;top:785.15px;font-size:14px;line-height:14px;color:#333;">kube-proxy</div>
<div class="t" style="left:645.00px;top:785.15px;font-size:14px;line-height:14px;color:#333;transform:scaleX(1.0292);">v1.24.0</div>
<div class="t" style="left:838.70px;top:788.15px;font-size:14px;line-height:14px;color:#333;transform:scaleX(1.0222);">ip-172-31-21-57.eu-...</div>
<div class="t" style="left:1335.50px;top:788.15px;font-size:14px;line-height:14px;color:#333;">Agentless</div>
<div class="t" style="left:1507.74px;top:785.87px;font-size:11.5px;line-height:11.5px;color:#2e2e2e;">37</div>
<div class="t" style="left:1579.50px;top:785.87px;font-size:11.5px;line-height:11.5px;color:#2e2e2e;">79</div>
<div class="t" style="left:1641.37px;top:785.87px;font-size:11.5px;line-height:11.5px;color:#2e2e2e;">21</div>
<div class="t" style="left:1726.92px;top:791.07px;font-size:11.5px;line-height:11.5px;color:#fff;font-weight:bold;">11</div>
<div class="t" style="left:1844.50px;top:788.15px;font-size:14px;line-height:14px;color:#1566ba;-webkit-text-stroke:0.35px #1566ba">+8</div>
<div class="t" style="left:479.00px;top:828.15px;font-size:14px;line-height:14px;color:#333;">webhooksite/laravel-e...</div>
<div class="t" style="left:645.00px;top:828.15px;font-size:14px;line-height:14px;color:#333;">latest</div>
<div class="t" style="left:838.70px;top:831.15px;font-size:14px;line-height:14px;color:#333;transform:scaleX(1.0243);">ip-172-31-42-202.ec...</div>
<div class="t" style="left:1335.50px;top:831.15px;font-size:14px;line-height:14px;color:#333;">Agentless</div>
<div class="t" style="left:1512.22px;top:828.87px;font-size:11.5px;line-height:11.5px;color:#2e2e2e;">105</div>
<div class="t" style="left:1606.48px;top:828.87px;font-size:11.5px;line-height:11.5px;color:#2e2e2e;">102</div>
<div class="t" style="left:1663.86px;top:828.87px;font-size:11.5px;line-height:11.5px;color:#2e2e2e;">17</div>
<div class="t" style="left:1726.60px;top:834.07px;font-size:11.5px;line-height:11.5px;color:#fff;font-weight:bold;">12</div>
<div class="t" style="left:1844.50px;top:831.15px;font-size:14px;line-height:14px;color:#1566ba;-webkit-text-stroke:0.35px #1566ba">+8</div>
<div class="t" style="left:312.30px;top:871.15px;font-size:14px;line-height:14px;color:#333;">k8s.gcr.io</div>
<div class="t" style="left:479.00px;top:871.15px;font-size:14px;line-height:14px;color:#333;">etcd</div>
<div class="t" style="left:645.00px;top:871.15px;font-size:14px;line-height:14px;color:#333;transform:scaleX(1.0307);">3.5.1-0</div>
<div class="t" style="left:838.70px;top:874.15px;font-size:14px;line-height:14px;color:#333;transform:scaleX(1.0222);">ip-172-31-26-85.eu-...</div>
<div class="t" style="left:1335.50px;top:874.15px;font-size:14px;line-height:14px;color:#333;">Agentless</div>
<div class="t" style="left:1503.53px;top:871.87px;font-size:11.5px;line-height:11.5px;color:#2e2e2e;">46</div>
<div class="t" style="left:1583.35px;top:871.87px;font-size:11.5px;line-height:11.5px;color:#2e2e2e;">101</div>
<div class="t" style="left:1652.62px;top:871.87px;font-size:11.5px;line-height:11.5px;color:#2e2e2e;">16</div>
<div class="t" style="left:1726.60px;top:877.07px;font-size:11.5px;line-height:11.5px;color:#fff;font-weight:bold;">12</div>
<div class="t" style="left:1844.50px;top:874.15px;font-size:14px;line-height:14px;color:#1566ba;-webkit-text-stroke:0.35px #1566ba">+8</div>
<div class="t" style="left:312.30px;top:914.15px;font-size:14px;line-height:14px;color:#333;">k8s.gcr.io</div>
<div class="t" style="left:479.00px;top:914.15px;font-size:14px;line-height:14px;color:#333;">etcd</div>
<div class="t" style="left:645.00px;top:914.15px;font-size:14px;line-height:14px;color:#333;transform:scaleX(1.0307);">3.5.1-0</div>
<div class="t" style="left:838.70px;top:917.15px;font-size:14px;line-height:14px;color:#333;transform:scaleX(1.0234);">ip-172-31-16-225.eu-...</div>
<div class="t" style="left:1335.50px;top:917.15px;font-size:14px;line-height:14px;color:#333;">Agentless</div>
<div class="t" style="left:1503.53px;top:914.87px;font-size:11.5px;line-height:11.5px;color:#2e2e2e;">46</div>
<div class="t" style="left:1583.35px;top:914.87px;font-size:11.5px;line-height:11.5px;color:#2e2e2e;">101</div>
<div class="t" style="left:1652.62px;top:914.87px;font-size:11.5px;line-height:11.5px;color:#2e2e2e;">16</div>
<div class="t" style="left:1726.60px;top:920.07px;font-size:11.5px;line-height:11.5px;color:#fff;font-weight:bold;">12</div>
<div class="t" style="left:1844.50px;top:917.15px;font-size:14px;line-height:14px;color:#1566ba;-webkit-text-stroke:0.35px #1566ba">+8</div>
<div class="t" style="left:312.30px;top:957.15px;font-size:14px;line-height:14px;color:#333;">k8s.gcr.io</div>
<div class="t" style="left:479.00px;top:957.15px;font-size:14px;line-height:14px;color:#333;">etcd</div>
<div class="t" style="left:645.00px;top:957.15px;font-size:14px;line-height:14px;color:#333;transform:scaleX(1.0307);">3.5.3-0</div>
<div class="t" style="left:838.70px;top:960.15px;font-size:14px;line-height:14px;color:#333;transform:scaleX(1.0222);">ip-172-31-21-57.eu-...</div>
<div class="t" style="left:1335.50px;top:960.15px;font-size:14px;line-height:14px;color:#333;">Agentless</div>
<div class="t" style="left:1508.46px;top:957.87px;font-size:11.5px;line-height:11.5px;color:#2e2e2e;">40</div>
<div class="t" style="left:1585.50px;top:957.87px;font-size:11.5px;line-height:11.5px;color:#2e2e2e;">86</div>
<div class="t" style="left:1646.64px;top:957.87px;font-size:11.5px;line-height:11.5px;color:#2e2e2e;">14</div>
<div class="t" style="left:1726.60px;top:963.07px;font-size:11.5px;line-height:11.5px;color:#fff;font-weight:bold;">12</div>
<div class="t" style="left:1844.50px;top:960.15px;font-size:14px;line-height:14px;color:#1566ba;-webkit-text-stroke:0.35px #1566ba">+8</div>
<div class="t" style="left:312.30px;top:1000.15px;font-size:14px;line-height:14px;color:#333;transform:scaleX(1.0276);">602401143452.dkr.ec...</div>
<div class="t" style="left:479.00px;top:1000.15px;font-size:14px;line-height:14px;color:#333;">amazon-k8s-cni</div>
<div class="t" style="left:645.00px;top:1000.15px;font-size:14px;line-height:14px;color:#333;transform:scaleX(1.0149);">v1.11.4-eksbuild.1</div>
<div class="t" style="left:838.70px;top:1003.15px;font-size:14px;line-height:14px;color:#333;">2 hosts</div>
<div class="t" style="left:1004.00px;top:1003.15px;font-size:14px;line-height:14px;color:#333;transform:scaleX(1.0191);">pcsup-16221-eks-1-24</div>
<div class="t" style="left:1335.50px;top:1003.15px;font-size:14px;line-height:14px;color:#333;">Defender</div>
<div class="t" style="left:1507.95px;top:1000.87px;font-size:11.5px;line-height:11.5px;color:#2e2e2e;">76</div>
<div class="t" style="left:1599.05px;top:1000.87px;font-size:11.5px;line-height:11.5px;color:#2e2e2e;">106</div>
<div class="t" style="left:1663.91px;top:1000.87px;font-size:11.5px;line-height:11.5px;color:#2e2e2e;">13</div>
<div class="t" style="left:1726.60px;top:1006.07px;font-size:11.5px;line-height:11.5px;color:#fff;font-weight:bold;">13</div>
<div class="t" style="left:1844.50px;top:1003.15px;font-size:14px;line-height:14px;color:#1566ba;-webkit-text-stroke:0.35px #1566ba">+8</div>
<div class="t" style="left:312.30px;top:1043.15px;font-size:14px;line-height:14px;color:#333;transform:scaleX(1.0274);">328549459982.dkr.ec...</div>
<div class="t" style="left:479.00px;top:1043.15px;font-size:14px;line-height:14px;color:#333;">bottlerocket-control</div>
<div class="t" style="left:645.00px;top:1043.15px;font-size:14px;line-height:14px;color:#333;transform:scaleX(1.0263);">v0.5.5</div>
<div class="t" style="left:838.70px;top:1046.15px;font-size:14px;line-height:14px;color:#333;">2 hosts</div>
<div class="t" style="left:1004.00px;top:1046.15px;font-size:14px;line-height:14px;color:#333;">bottlerocket</div>
<div class="t" style="left:1335.50px;top:1046.15px;font-size:14px;line-height:14px;color:#333;">Agentless</div>
<div class="t" style="left:1518.09px;top:1043.87px;font-size:11.5px;line-height:11.5px;color:#2e2e2e;">82</div>
<div class="t" style="left:1609.19px;top:1043.87px;font-size:11.5px;line-height:11.5px;color:#2e2e2e;">86</div>
<div class="t" style="left:1663.91px;top:1043.87px;font-size:11.5px;line-height:11.5px;color:#2e2e2e;">9</div>
<div class="t" style="left:1726.60px;top:1049.07px;font-size:11.5px;line-height:11.5px;color:#fff;font-weight:bold;">12</div>
<div class="t" style="left:1844.50px;top:1046.15px;font-size:14px;line-height:14px;color:#1566ba;-webkit-text-stroke:0.35px #1566ba">+8</div>
</body></html>
